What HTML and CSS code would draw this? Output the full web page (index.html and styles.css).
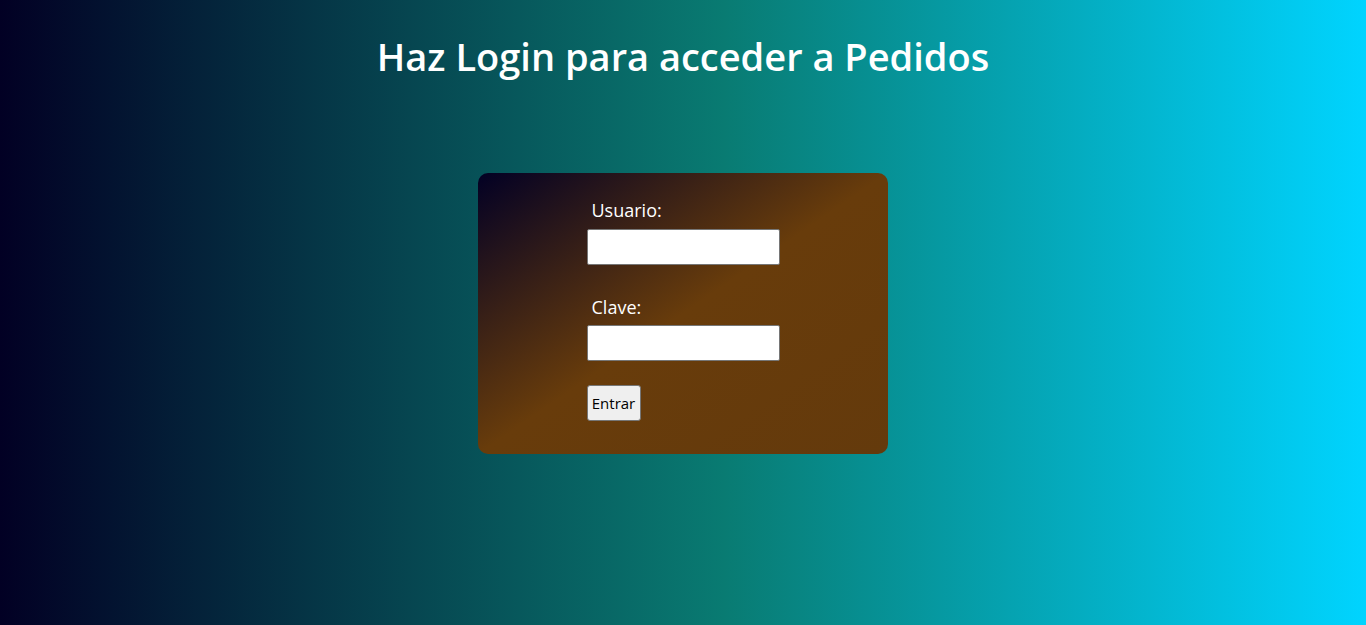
FILE: index.html
```html
<!DOCTYPE html>
<html lang="es">
<head>
<meta charset="utf-8">
<title>Login Pedidos</title>
<link rel="stylesheet" href="styles.css">
</head>
<body>
  <h1 class="title">Haz Login para acceder a Pedidos</h1>
  <div class="card">
    <form class="login-form">
      <label class="field-label" for="usuario">Usuario:</label>
      <input class="field-input" type="text" id="usuario">
      <label class="field-label field-label--second" for="clave">Clave:</label>
      <input class="field-input" type="password" id="clave">
      <button class="submit-btn" type="button">Entrar</button>
    </form>
  </div>
</body>
</html>
```
FILE: styles.css
```css
html, body {
  margin: 0;
  height: 100%;
}
body {
  font-family: "Open Sans", "Noto Sans", sans-serif;
  background: linear-gradient(90deg, #020024 0%, #097b72 53%, #00d4ff 100%);
  color: #fff;
  overflow: hidden;
}
.title {
  margin: 0;
  padding-top: 31px;
  text-align: center;
  font-size: 38px;
  font-weight: 600;
  line-height: 50px;
}
.card {
  width: 410px;
  height: 281px;
  margin: 92px auto 0;
  box-sizing: border-box;
  padding-top: 25px;
  border-radius: 10px;
  background: linear-gradient(to bottom right, #020024 0%, #683c0b 50%, #643a0c 100%);
}
.login-form {
  width: 193px;
  margin: 0 auto;
  display: flex;
  flex-direction: column;
  align-items: flex-start;
}
.field-label {
  display: block;
  padding-left: 5px;
  font-size: 18px;
  line-height: 25px;
  margin-bottom: 6px;
}
.field-label--second {
  margin-top: 30px;
  margin-bottom: 5px;
}
.field-input {
  box-sizing: border-box;
  width: 193px;
  height: 36px;
  margin: 0;
  border: 1px solid #767676;
  border-radius: 2px;
  background: #fff;
}
.submit-btn {
  margin-top: 24px;
  box-sizing: border-box;
  width: 54px;
  height: 36px;
  padding: 0;
  font-family: "Open Sans", "Noto Sans", sans-serif;
  font-size: 15px;
  color: #000;
  background: #efefef;
  border: 1px solid #767676;
  border-radius: 3px;
}
```
